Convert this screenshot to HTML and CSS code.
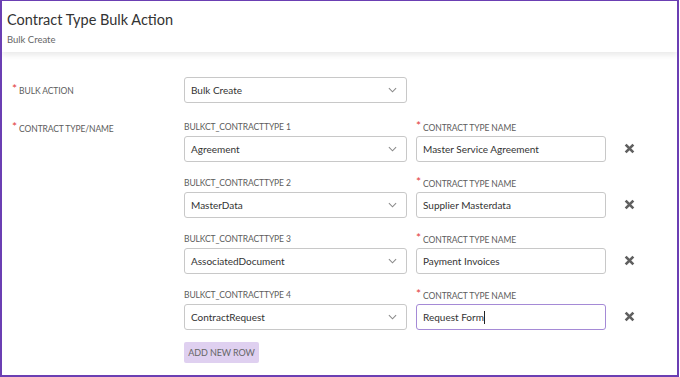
FILE: index.html
```html
<!DOCTYPE html>
<html lang="en">
<head>
    <meta charset="UTF-8">
    <title>Contract Type Bulk Action</title>
    <link rel="stylesheet" href="styles.css">
</head>
<body>
    <div class="frame">
        <div class="header">
            <h1>Contract Type Bulk Action</h1>
            <p>Bulk Create</p>
        </div>

        <div class="content">
            <div class="form-row action-row">
                <label class="field-label"><span class="req">*</span> BULK ACTION</label>
                <div class="select-box wide">
                    <span>Bulk Create</span>
                    <svg class="chev" viewBox="0 0 10 6"><path d="M1 1l4 4 4-4"/></svg>
                </div>
            </div>

            <div class="form-row">
                <label class="field-label top"><span class="req">*</span> CONTRACT TYPE/NAME</label>
                <div class="type-list">
                    <div class="type-row">
                        <div class="col">
                            <div class="small-label">BULKCT_CONTRACTTYPE 1</div>
                            <div class="select-box">
                                <span>Agreement</span>
                                <svg class="chev" viewBox="0 0 10 6"><path d="M1 1l4 4 4-4"/></svg>
                            </div>
                        </div>
                        <div class="col">
                            <div class="small-label"><span class="req">*</span> CONTRACT TYPE NAME</div>
                            <div class="text-box">Master Service Agreement</div>
                        </div>
                        <svg class="remove" viewBox="0 0 10 10"><path d="M1.5 1.5l7 7M8.5 1.5l-7 7"/></svg>
                    </div>

                    <div class="type-row">
                        <div class="col">
                            <div class="small-label">BULKCT_CONTRACTTYPE 2</div>
                            <div class="select-box">
                                <span>MasterData</span>
                                <svg class="chev" viewBox="0 0 10 6"><path d="M1 1l4 4 4-4"/></svg>
                            </div>
                        </div>
                        <div class="col">
                            <div class="small-label"><span class="req">*</span> CONTRACT TYPE NAME</div>
                            <div class="text-box">Supplier Masterdata</div>
                        </div>
                        <svg class="remove" viewBox="0 0 10 10"><path d="M1.5 1.5l7 7M8.5 1.5l-7 7"/></svg>
                    </div>

                    <div class="type-row">
                        <div class="col">
                            <div class="small-label">BULKCT_CONTRACTTYPE 3</div>
                            <div class="select-box">
                                <span>AssociatedDocument</span>
                                <svg class="chev" viewBox="0 0 10 6"><path d="M1 1l4 4 4-4"/></svg>
                            </div>
                        </div>
                        <div class="col">
                            <div class="small-label"><span class="req">*</span> CONTRACT TYPE NAME</div>
                            <div class="text-box">Payment Invoices</div>
                        </div>
                        <svg class="remove" viewBox="0 0 10 10"><path d="M1.5 1.5l7 7M8.5 1.5l-7 7"/></svg>
                    </div>

                    <div class="type-row">
                        <div class="col">
                            <div class="small-label">BULKCT_CONTRACTTYPE 4</div>
                            <div class="select-box">
                                <span>ContractRequest</span>
                                <svg class="chev" viewBox="0 0 10 6"><path d="M1 1l4 4 4-4"/></svg>
                            </div>
                        </div>
                        <div class="col">
                            <div class="small-label"><span class="req">*</span> CONTRACT TYPE NAME</div>
                            <div class="text-box focused">Request Form<span class="caret"></span></div>
                        </div>
                        <svg class="remove" viewBox="0 0 10 10"><path d="M1.5 1.5l7 7M8.5 1.5l-7 7"/></svg>
                    </div>

                    <button class="add-btn">ADD NEW ROW</button>
                </div>
            </div>
        </div>
    </div>
</body>
</html>
```

FILE: styles.css
```css
* {
    margin: 0;
    padding: 0;
    box-sizing: border-box;
    font-family: Lato, 'Noto Sans', sans-serif;
}

body {
    background: #fff;
    color: #333;
}

.frame {
    width: 679px;
    height: 377px;
    border: 2px solid #6b3fb3;
    border-top-width: 1px;
    background: #fff;
    overflow: hidden;
}

.header {
    padding: 10px 5px 0;
    height: 51px;
    background: #fff;
    box-shadow: 0 3px 6px rgba(0,0,0,0.09);
    position: relative;
}

.header h1 {
    font-size: 14.5px;
    font-weight: 400;
    color: #333;
    line-height: 18px;
}

.header p {
    font-size: 9.5px;
    color: #666;
    margin-top: 5px;
}

.content {
    padding: 25px 0 0 10px;
}

.form-row {
    display: flex;
}

.action-row {
    align-items: center;
    margin-bottom: 19px;
}

.field-label {
    width: 172px;
    font-size: 8.5px;
    color: #5c5c5c;
    letter-spacing: -0.1px;
}

.field-label.top {
    padding-top: 1px;
}

.req {
    color: #e23b3b;
    font-size: 12px;
    vertical-align: 1px;
    line-height: 8px;
}

.select-box,
.text-box {
    height: 26px;
    border: 1px solid #c8c8c8;
    border-radius: 3px;
    display: flex;
    align-items: center;
    padding: 0 6px;
    font-size: 10px;
    color: #333;
    background: #fff;
}

.select-box {
    width: 223px;
    justify-content: space-between;
}

.chev {
    width: 9px;
    height: 6px;
    fill: none;
    stroke: #8a8a8a;
    stroke-width: 1.2;
    margin-right: 3px;
}

.type-list {
    display: flex;
    flex-direction: column;
    gap: 16px;
}

.type-row {
    display: flex;
    align-items: flex-end;
}

.col + .col {
    margin-left: 9px;
}

.col:nth-child(2) {
    width: 190px;
}

.small-label {
    font-size: 8.5px;
    color: #5c5c5c;
    height: 11px;
    line-height: 11px;
    margin-bottom: 3px;
    letter-spacing: -0.1px;
    overflow: visible;
}

.text-box {
    width: 190px;
}

.text-box.focused {
    border-color: #a58ad6;
}

.caret {
    display: inline-block;
    width: 1px;
    height: 13px;
    background: #222;
}

.remove {
    width: 11px;
    height: 11px;
    fill: none;
    stroke: #606060;
    stroke-width: 2.4;
    margin: 0 0 8px 18px;
}

.add-btn {
    align-self: flex-start;
    margin-top: -4px;
    width: 75px;
    height: 21px;
    border: none;
    border-radius: 2px;
    background: #dfd0f0;
    color: #666;
    font-size: 9px;
    letter-spacing: -0.1px;
}
```
